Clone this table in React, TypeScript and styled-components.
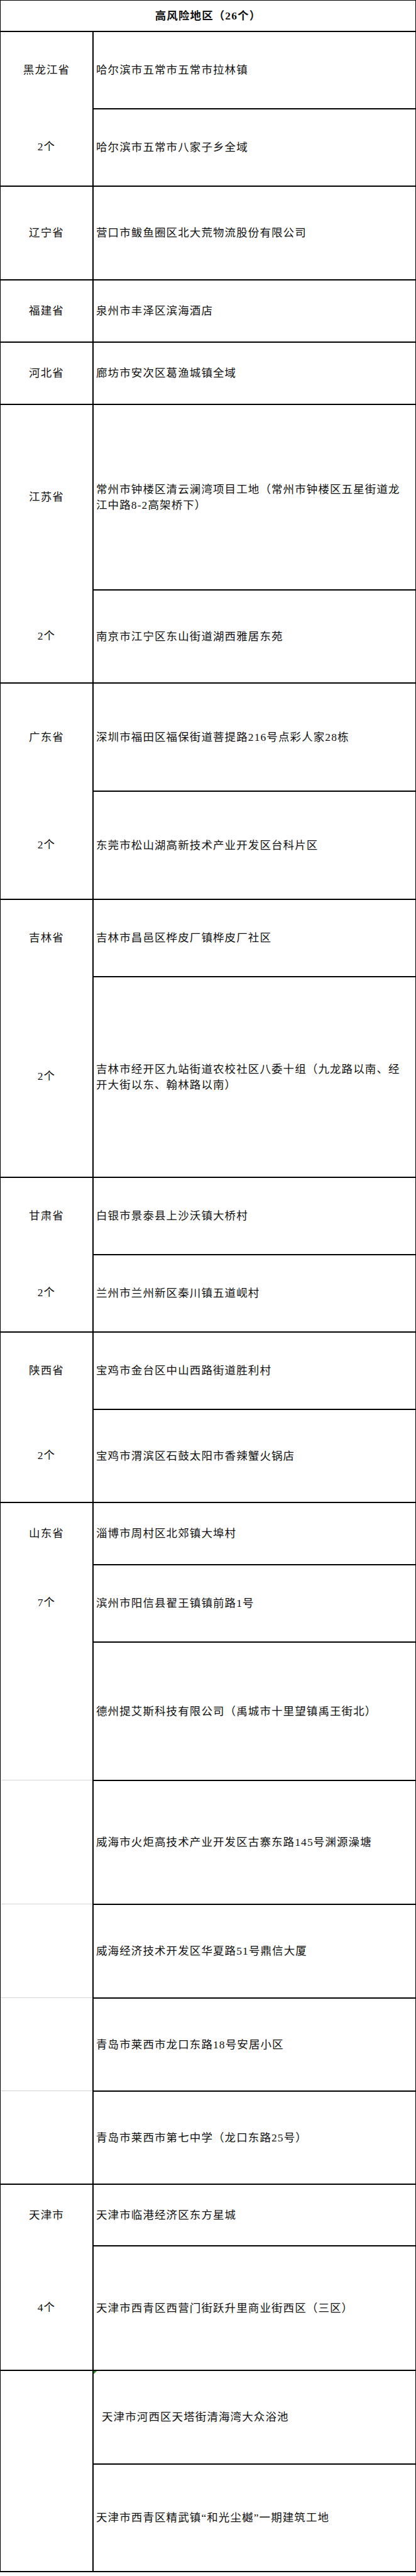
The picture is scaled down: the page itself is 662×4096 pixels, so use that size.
import React from 'react';
import styled, { createGlobalStyle } from 'styled-components';

const GlobalStyle = createGlobalStyle`
  html, body {
    margin: 0;
    padding: 0;
    background: #ffffff;
  }
  * {
    box-sizing: border-box;
  }
`;

type LeftLine = 'none' | 'gray' | 'black';

interface AreaRow {
  text: string;
  h: number;
  left?: LeftLine;
  indent?: boolean;
  flag?: boolean;
}

interface Region {
  name: string;
  count?: string;
  rows: AreaRow[];
}

const regions: Region[] = [
  {
    name: '黑龙江省',
    count: '2个',
    rows: [
      { text: '哈尔滨市五常市五常市拉林镇', h: 123 },
      { text: '哈尔滨市五常市八家子乡全域', h: 123 },
    ],
  },
  { name: '辽宁省', rows: [{ text: '营口市鲅鱼圈区北大荒物流股份有限公司', h: 149 }] },
  { name: '福建省', rows: [{ text: '泉州市丰泽区滨海酒店', h: 99 }] },
  { name: '河北省', rows: [{ text: '廊坊市安次区葛渔城镇全域', h: 99 }] },
  {
    name: '江苏省',
    count: '2个',
    rows: [
      { text: '常州市钟楼区清云澜湾项目工地（常州市钟楼区五星街道龙江中路8-2高架桥下）', h: 295 },
      { text: '南京市江宁区东山街道湖西雅居东苑', h: 148 },
    ],
  },
  {
    name: '广东省',
    count: '2个',
    rows: [
      { text: '深圳市福田区福保街道菩提路216号点彩人家28栋', h: 172 },
      { text: '东莞市松山湖高新技术产业开发区台科片区', h: 172 },
    ],
  },
  {
    name: '吉林省',
    count: '2个',
    rows: [
      { text: '吉林市昌邑区桦皮厂镇桦皮厂社区', h: 123 },
      { text: '吉林市经开区九站街道农校社区八委十组（九龙路以南、经开大街以东、翰林路以南）', h: 319 },
    ],
  },
  {
    name: '甘肃省',
    count: '2个',
    rows: [
      { text: '白银市景泰县上沙沃镇大桥村', h: 123 },
      { text: '兰州市兰州新区秦川镇五道岘村', h: 123 },
    ],
  },
  {
    name: '陕西省',
    count: '2个',
    rows: [
      { text: '宝鸡市金台区中山西路街道胜利村', h: 123 },
      { text: '宝鸡市渭滨区石鼓太阳市香辣蟹火锅店', h: 148 },
    ],
  },
  {
    name: '山东省',
    count: '7个',
    rows: [
      { text: '淄博市周村区北郊镇大埠村', h: 99 },
      { text: '滨州市阳信县翟王镇镇前路1号', h: 123 },
      { text: '德州提艾斯科技有限公司（禹城市十里望镇禹王街北）', h: 220 },
      { text: '威海市火炬高技术产业开发区古寨东路145号渊源澡塘', h: 197, left: 'gray' },
      { text: '威海经济技术开发区华夏路51号鼎信大厦', h: 149, left: 'gray' },
      { text: '青岛市莱西市龙口东路18号安居小区', h: 148, left: 'gray' },
      { text: '青岛市莱西市第七中学（龙口东路25号）', h: 148, left: 'gray' },
    ],
  },
  {
    name: '天津市',
    count: '4个',
    rows: [
      { text: '天津市临港经济区东方星城', h: 98 },
      { text: '天津市西青区西营门街跃升里商业街西区（三区）', h: 198 },
      { text: '天津市河西区天塔街清海湾大众浴池', h: 149, left: 'black', indent: true, flag: true },
      { text: '天津市西青区精武镇“和光尘樾”一期建筑工地', h: 171 },
    ],
  },
];

const Sheet = styled.div`
  width: 662px;
  border-top: 1px solid #000;
  border-left: 1px solid #000;
  border-right: 1px solid #000;
  border-bottom: 2px solid #000;
  font-family: 'Liberation Serif', 'Noto Sans CJK SC', serif;
  font-size: 17.5px;
  letter-spacing: 1.1px;
  line-height: 25px;
  color: #111;
`;

const Header = styled.div`
  height: 48px;
  display: flex;
  align-items: center;
  justify-content: center;
  font-weight: 700;
`;

const Group = styled.div`
  display: grid;
  grid-template-columns: 146px 1fr;
`;

const lineFor = (line: LeftLine) => {
  if (line === 'black') return '2px solid #000';
  if (line === 'gray') return '1px solid #d4d4d4';
  return 'none';
};

const LabelCell = styled.div<{ $line: LeftLine }>`
  display: flex;
  align-items: center;
  justify-content: center;
  border-top: ${(p) => lineFor(p.$line)};
`;

const AreaCell = styled.div<{ $h: number; $indent?: boolean }>`
  position: relative;
  height: ${(p) => p.$h}px;
  display: flex;
  align-items: center;
  padding: 0 12px 0 ${(p) => (p.$indent ? 13 : 4)}px;
  border-top: 2px solid #000;
  border-left: 2px solid #000;
`;

const AreaText = styled.span`
  display: block;
`;

// little green corner mark from the spreadsheet
const Flag = styled.span`
  position: absolute;
  top: 0;
  left: 0;
  width: 0;
  height: 0;
  border-top: 5px solid #1c8c1c;
  border-right: 5px solid transparent;
`;

const RegionBlock: React.FC<{ region: Region }> = ({ region }) => (
  <Group>
    {region.rows.map((row, i) => {
      const label = i === 0 ? region.name : i === 1 ? region.count : '';
      const line: LeftLine = i === 0 ? 'black' : row.left ?? 'none';
      return (
        <React.Fragment key={row.text}>
          <LabelCell $line={line}>{label}</LabelCell>
          <AreaCell $h={row.h} $indent={row.indent}>
            {row.flag && <Flag />}
            <AreaText>{row.text}</AreaText>
          </AreaCell>
        </React.Fragment>
      );
    })}
  </Group>
);

const App: React.FC = () => {
  return (
    <>
      <GlobalStyle />
      <Sheet>
        <Header>高风险地区（26个）</Header>
        {regions.map((r) => (
          <RegionBlock key={r.name} region={r} />
        ))}
      </Sheet>
    </>
  );
};

export default App;
